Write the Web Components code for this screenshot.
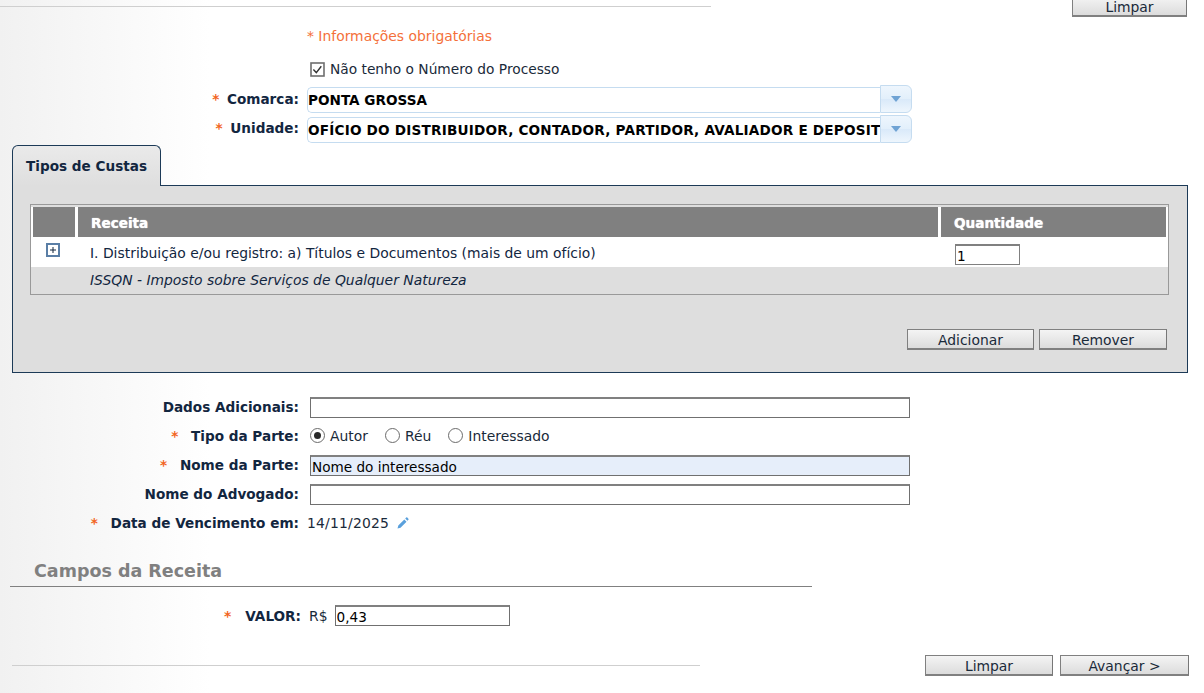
<!DOCTYPE html>
<html>
<head>
<meta charset="utf-8">
<title>Custas</title>
<style>
  html, body { margin: 0; height: 693px; overflow: hidden; }
  body {
    font: 13.9px "DejaVu Sans", Verdana, sans-serif;
    color: #1a2a3a;
    background: linear-gradient(to right, #f1f1f1, #ffffff 210px);
  }
</style>
</head>
<body>
<custas-page></custas-page>

<script>
class CtButton extends HTMLElement {
  constructor() {
    super();
    this.attachShadow({ mode: "open" }).innerHTML = `
      <style>
        :host { display: block; box-sizing: border-box; height: 21px; }
        button {
          display: block; width: 100%; height: 100%; padding: 1px 0 0; margin: 0;
          box-sizing: border-box;
          font: 13.9px "DejaVu Sans", sans-serif; color: #1a2a3a;
          border: 1px solid #808080; border-right-color: #777; border-bottom: 2px solid #808080;
          background: linear-gradient(#f4f4f4, #dcdcdc);
        }
      </style>
      <button><slot></slot></button>`;
  }
}

class CtRule extends HTMLElement {
  constructor() {
    super();
    this.attachShadow({ mode: "open" }).innerHTML = `
      <style>:host { display: block; height: 1px; background: #cfcfcf; }</style>`;
  }
}

class CtField extends HTMLElement {
  constructor() {
    super();
    this.attachShadow({ mode: "open" }).innerHTML = `
      <style>
        :host { display: grid; grid-template-columns: 299px 1fr; column-gap: 8px; align-items: center; height: 29px; }
        .label { text-align: right; font-weight: bold; font-size: 13.6px; color: #12263f; white-space: nowrap; margin-bottom: var(--label-lift, 0); }
        .star { color: #f26522; margin-right: var(--star-gap, 8px); display: none; }
        :host([required]) .star { display: inline; }
        .value { display: flex; align-items: center; min-width: 0; }
      </style>
      <div class="label"><span class="star">*</span> <span class="text"></span></div>
      <div class="value"><slot></slot></div>`;
  }
  connectedCallback() {
    this.shadowRoot.querySelector(".text").textContent = this.getAttribute("label");
  }
}

class CtCombo extends HTMLElement {
  constructor() {
    super();
    this.attachShadow({ mode: "open" }).innerHTML = `
      <style>
        :host { display: flex; width: 605px; height: 26px; box-sizing: border-box; }
        .text {
          flex: 1; min-width: 0; overflow: hidden; white-space: nowrap;
          box-sizing: border-box; height: 26px; margin-top: 1px;
          border: 1px solid #c5dcf0; border-right: 0; border-radius: 5px 0 0 5px;
          background: #fff; color: #000; font-weight: bold; font-size: 13.6px; line-height: 24px;
          letter-spacing: var(--combo-spacing, 0);
        }
        .arrow {
          width: 32px; height: 28px; margin-top: -1px; box-sizing: border-box;
          border: 1px solid #c5dcf0; border-radius: 0 6px 6px 0;
          background: linear-gradient(#eef6fd, #e2effb 50%, #d9e9f9 50%, #eef6fd);
          display: flex; align-items: center; justify-content: center;
        }
        .arrow i { width: 0; height: 0; border: 5px solid transparent; border-top: 6px solid #6fa3d4; border-bottom: 0; }
      </style>
      <div class="text"><slot></slot></div>
      <div class="arrow"><i></i></div>`;
  }
}

class CtInput extends HTMLElement {
  constructor() {
    super();
    this.attachShadow({ mode: "open" }).innerHTML = `
      <style>
        :host { display: block; box-sizing: border-box; height: 21px; }
        input {
          display: block; width: 100%; height: 100%; box-sizing: border-box; margin: 0;
          padding: 1px 1px 0; font: 13.6px "DejaVu Sans", sans-serif; color: #000;
          border: 1px solid #707070; border-top: 2px solid #808080; background: var(--bg, #fff); outline: none;
        }
      </style>
      <input type="text">`;
  }
  connectedCallback() {
    this.shadowRoot.querySelector("input").value = this.getAttribute("value") || "";
  }
}

class CtRadio extends HTMLElement {
  constructor() {
    super();
    this.attachShadow({ mode: "open" }).innerHTML = `
      <style>
        :host { display: inline-flex; align-items: center; gap: 5px; margin-right: 17px; }
        .dot { width: 15px; height: 15px; box-sizing: border-box; border: 1px solid #6b6b6b; border-radius: 50%; background: #fff; display: flex; align-items: center; justify-content: center; }
        .dot i { display: none; width: 7px; height: 7px; border-radius: 50%; background: #2a2a2a; }
        :host([checked]) .dot i { display: block; }
      </style>
      <span class="dot"><i></i></span><slot></slot>`;
  }
}

class CtTabs extends HTMLElement {
  constructor() {
    super();
    this.attachShadow({ mode: "open" }).innerHTML = `
      <style>
        :host { display: block; margin: 0 16px 0 12px; }
        .tab {
          box-sizing: border-box; width: 149px; height: 41px; margin-bottom: -1px; position: relative; z-index: 1;
          border: 1px solid #1c3a57; border-bottom: 0; border-radius: 6px 6px 0 0;
          background: linear-gradient(#eaeaea, #dedede);
          font-weight: bold; font-size: 13.6px; color: #12263f; padding: 12px 0 0 13px;
        }
        .panel {
          box-sizing: border-box; height: 188px; padding: 18px 18px 0 17px;
          border: 1px solid #1c3a57; background: #dedede;
        }
      </style>
      <div class="tab"><slot name="tab"></slot></div>
      <div class="panel"><slot></slot></div>`;
  }
}

class CtGrid extends HTMLElement {
  constructor() {
    super();
    this.attachShadow({ mode: "open" }).innerHTML = `
      <style>
        :host { display: block; box-sizing: border-box; height: 91px; border: 1px solid #999; padding-top: 2px; background: #dedede; }
        .head { display: grid; grid-template-columns: 42px 860px 225px; grid-template-rows: 30px; column-gap: 3px; height: 30px; padding-left: 2px; background: #fff; }
        .head div { background: #808080; color: #fff; font-weight: bold; font-size: 13.6px; line-height: 32px; height: 30px; overflow: hidden; padding-left: 13px; text-shadow: 0 0 1px #fff; }
        .row { display: grid; grid-template-columns: 59px 1fr 213px; height: 30px; background: #fff; align-items: center; }
        .row span { color: #12263f; margin-top: 2px; }
        .plus { width: 14px; height: 14px; margin: 0 0 4px 15px; box-sizing: border-box; border: 2px solid #5a7ea6; background: #fff; display: block; }
        .sub { height: 27px; line-height: 27px; padding-left: 59px; font-style: italic; color: #12263f; }
        .qty { width: 65px; height: 21px; box-sizing: border-box; margin: 5px 0 0; padding: 1px 1px 0; border: 1px solid #808080; border-top-width: 2px; font: 13.6px "DejaVu Sans", sans-serif; color: #000; outline: none; }
      </style>
      <div class="head"><div></div><div>Receita</div><div>Quantidade</div></div>
      <div class="row">
        <svg class="plus" viewBox="0 0 10 10"><path d="M2 5h6M5 2v6" stroke="#12263f" stroke-width="1"/></svg>
        <span>I. Distribuição e/ou registro: a) Títulos e Documentos (mais de um ofício)</span>
        <input class="qty" type="text" value="1">
      </div>
      <div class="sub">ISSQN - Imposto sobre Serviços de Qualquer Natureza</div>`;
  }
}

class CustasPage extends HTMLElement {
  constructor() {
    super();
    this.attachShadow({ mode: "open" }).innerHTML = `
      <style>
        :host { display: block; }
        .top { display: flex; justify-content: space-between; height: 17px; }
        .top ct-rule { width: 711px; margin-top: 6px; }
        .top ct-button { width: 115px; margin: -4px 17px 0 0; }
        .note { margin: 11px 0 0 307px; height: 17px; line-height: 17px; color: #f4703a; }
        .check { display: flex; align-items: center; gap: 5px; margin: 15px 0 0 310px; height: 18px; font-size: 13.75px; }
        .combos { margin-top: 7px; --star-gap: 3px; --label-lift: 2px; }
        .combos ct-combo:first-child { margin-bottom: 1px; }
        .combo-low { margin-top: 1px; --combo-spacing: 0.2px; }
        .tabs-wrap { margin-top: 2px; }
        .actions { display: flex; justify-content: flex-end; gap: 5px; margin-top: 34px; padding-right: 2px; }
        .actions ct-button { width: 127px; }
        .actions ct-button + ct-button { width: 128px; }
        .form { margin-top: 19px; }
        .form ct-input { width: 600px; margin: 2px 0 0 3px; }
        .form ct-radio:first-child { margin-left: 3px; }
        .date { letter-spacing: 0.2px; }
        .edit { margin-left: 7px; display: block; }
        h3 { margin: 24px 0 0 10px; padding: 0 0 5px 24px; width: 778px; border-bottom: 1px solid #808080; font: bold 17.5px "DejaVu Sans", sans-serif; color: #808080; height: 20px; line-height: 20px; }
        .valor { display: flex; align-items: center; height: 21px; margin: 18px 0 0 224px; }
        .valor b { color: #12263f; font-size: 13.6px; margin-right: 8px; }
        .valor .star { color: #f26522; font-weight: bold; margin-right: 14px; }
        .valor ct-input { width: 175px; margin-left: 7px; }
        .bottom { display: flex; align-items: center; margin-top: 29px; padding-left: 12px; height: 21px; }
        .bottom ct-rule { width: 688px; margin-right: 225px; }
        .bottom ct-button { width: 128px; }
        .bottom ct-button + ct-button { width: 129px; margin-left: 7px; }
      </style>
      <div class="top"><ct-rule></ct-rule><ct-button>Limpar</ct-button></div>
      <div class="note">* Informações obrigatórias</div>
      <div class="check">
        <svg width="15" height="15" viewBox="0 0 15 15"><rect x="1" y="1" width="13" height="13" fill="#fff" stroke="#6e6e6e" stroke-width="1.6"/><path d="M3.4 7.6l2.9 3 5-6.4" fill="none" stroke="#333" stroke-width="1.4"/></svg>
        <span>Não tenho o Número do Processo</span>
      </div>
      <div class="combos">
        <ct-field required label="Comarca:"><ct-combo>PONTA GROSSA</ct-combo></ct-field>
        <ct-field required label="Unidade:"><ct-combo class="combo-low">OFÍCIO DO DISTRIBUIDOR, CONTADOR, PARTIDOR, AVALIADOR E DEPOSIT</ct-combo></ct-field>
      </div>
      <div class="tabs-wrap">
        <ct-tabs>
          <span slot="tab">Tipos de Custas</span>
          <ct-grid></ct-grid>
          <div class="actions"><ct-button>Adicionar</ct-button><ct-button>Remover</ct-button></div>
        </ct-tabs>
      </div>
      <div class="form">
        <ct-field label="Dados Adicionais:"><ct-input></ct-input></ct-field>
        <ct-field required label="Tipo da Parte:">
          <ct-radio checked>Autor</ct-radio><ct-radio>Réu</ct-radio><ct-radio>Interessado</ct-radio>
        </ct-field>
        <ct-field required label="Nome da Parte:"><ct-input value="Nome do interessado" style="--bg:#e6eefa"></ct-input></ct-field>
        <ct-field label="Nome do Advogado:"><ct-input></ct-input></ct-field>
        <ct-field required label="Data de Vencimento em:">
          <span class="date">14/11/2025</span>
          <svg class="edit" width="14" height="14" viewBox="0 0 14 14"><path d="M1.5 12.5l.8-3 6-6 2.2 2.2-6 6zM9.2 2.6l1-1a.8.8 0 0 1 1.1 0l1.1 1.1a.8.8 0 0 1 0 1.1l-1 1z" fill="#5aa0dc"/></svg>
        </ct-field>
      </div>
      <h3>Campos da Receita</h3>
      <div class="valor"><span class="star">*</span><b>VALOR:</b><span>R$</span><ct-input value="0,43"></ct-input></div>
      <div class="bottom"><ct-rule></ct-rule><ct-button>Limpar</ct-button><ct-button>Avançar &gt;</ct-button></div>`;
  }
}

customElements.define("ct-button", CtButton);
customElements.define("ct-rule", CtRule);
customElements.define("ct-field", CtField);
customElements.define("ct-combo", CtCombo);
customElements.define("ct-input", CtInput);
customElements.define("ct-radio", CtRadio);
customElements.define("ct-tabs", CtTabs);
customElements.define("ct-grid", CtGrid);
customElements.define("custas-page", CustasPage);
</script>
</body>
</html>
